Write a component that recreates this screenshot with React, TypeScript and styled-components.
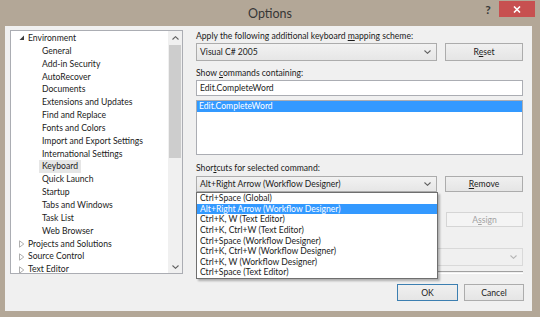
import React from 'react';
import styled, { createGlobalStyle } from 'styled-components';

const GlobalStyle = createGlobalStyle`
  html, body {
    margin: 0;
    padding: 0;
  }
  body {
    background: #b3a797;
    font-family: Lato, "Noto Sans", sans-serif;
  }
`;

interface TreeItem {
  label: string;
  level: number;
  state?: 'open' | 'closed';
  selected?: boolean;
}

const treeItems: TreeItem[] = [
  { label: 'Environment', level: 0, state: 'open' },
  { label: 'General', level: 1 },
  { label: 'Add-in Security', level: 1 },
  { label: 'AutoRecover', level: 1 },
  { label: 'Documents', level: 1 },
  { label: 'Extensions and Updates', level: 1 },
  { label: 'Find and Replace', level: 1 },
  { label: 'Fonts and Colors', level: 1 },
  { label: 'Import and Export Settings', level: 1 },
  { label: 'International Settings', level: 1 },
  { label: 'Keyboard', level: 1, selected: true },
  { label: 'Quick Launch', level: 1 },
  { label: 'Startup', level: 1 },
  { label: 'Tabs and Windows', level: 1 },
  { label: 'Task List', level: 1 },
  { label: 'Web Browser', level: 1 },
  { label: 'Projects and Solutions', level: 0, state: 'closed' },
  { label: 'Source Control', level: 0, state: 'closed' },
  { label: 'Text Editor', level: 0, state: 'closed' },
];

const shortcuts = [
  'Ctrl+Space (Global)',
  'Alt+Right Arrow (Workflow Designer)',
  'Ctrl+K, W (Text Editor)',
  'Ctrl+K, Ctrl+W (Text Editor)',
  'Ctrl+Space (Workflow Designer)',
  'Ctrl+K, Ctrl+W (Workflow Designer)',
  'Ctrl+K, W (Workflow Designer)',
  'Ctrl+Space (Text Editor)',
];

// Window chrome
const Window = styled.div`
  width: 540px;
  height: 317px;
  background: #b3a797;
  display: flex;
  flex-direction: column;
`;

const TitleBar = styled.div`
  height: 26px;
  flex-shrink: 0;
  display: grid;
  grid-template-columns: 1fr auto 1fr;
  align-items: center;
`;

const Title = styled.div`
  grid-column: 2;
  font-size: 12.5px;
  color: #363636;
  padding-top: 1px;
`;

const Controls = styled.div`
  grid-column: 3;
  justify-self: end;
  align-self: start;
  display: flex;
  align-items: center;
  gap: 5px;
  margin: 1px 5px 0 0;
`;

const HelpGlyph = styled.span`
  width: 12px;
  text-align: center;
  font-size: 12px;
  font-weight: bold;
  color: #3a3a3a;
`;

const CloseButton = styled.div`
  width: 36px;
  height: 16px;
  background: #c75050;
  display: flex;
  align-items: center;
  justify-content: center;
`;

const Client = styled.div`
  flex: 1;
  margin: 0 8px 6px 5px;
  padding: 4px 8px 10px 5px;
  background: #f0f0f0;
  display: flex;
  flex-direction: column;
  font-size: 8.6px;
  color: #1b1b1b;
`;

const Body = styled.div`
  display: flex;
  gap: 13px;
  height: 244px;
`;

// Tree
const TreeBox = styled.div`
  width: 173px;
  height: 244px;
  box-sizing: border-box;
  border: 1px solid #abadb3;
  background: #fff;
  display: flex;
  overflow: hidden;
`;

const TreeList = styled.ul`
  flex: 1;
  margin: 0;
  padding: 1px 0 0;
  list-style: none;
  overflow: hidden;
`;

const TreeRow = styled.li<{ $level: number }>`
  display: flex;
  align-items: center;
  height: 12.85px;
  padding-left: ${(p) => (p.$level === 0 ? 6 : 20)}px;
  white-space: nowrap;
`;

const Expander = styled.span`
  width: 11px;
  flex-shrink: 0;
  display: flex;
  align-items: center;
  padding-left: 2px;
  box-sizing: border-box;
`;

const TreeLabel = styled.span<{ $selected?: boolean }>`
  line-height: 12.85px;
  padding: 0 3px;
  margin-left: -3px;
  background: ${(p) => (p.$selected ? '#e6e6e6' : 'transparent')};
`;

const ScrollTrack = styled.div`
  width: 14px;
  flex-shrink: 0;
  background: #f0f0f0;
  display: flex;
  flex-direction: column;
`;

const ScrollArrow = styled.div`
  height: 13px;
  display: flex;
  align-items: center;
  justify-content: center;
`;

const ScrollThumb = styled.div`
  height: 113px;
  margin: 1px 1px 0;
  background: #cdcdcd;
`;

const ScrollSpace = styled.div`
  flex: 1;
`;

// Right pane
const Pane = styled.div`
  width: 327px;
  display: flex;
  flex-direction: column;
`;

const Label = styled.div<{ $gap: number }>`
  height: 12px;
  line-height: 12px;
  margin-top: ${(p) => p.$gap}px;
  white-space: nowrap;
`;

const Row = styled.div<{ $gap: number; $height: number }>`
  display: flex;
  gap: 8px;
  margin-top: ${(p) => p.$gap}px;
  height: ${(p) => p.$height}px;
`;

const ComboWrap = styled.div`
  position: relative;
  width: 241px;
  flex-shrink: 0;
`;

const Combo = styled.div<{ $disabled?: boolean }>`
  flex: 1;
  height: 100%;
  box-sizing: border-box;
  border: 1px solid ${(p) => (p.$disabled ? '#d9d9d9' : '#acacac')};
  background: ${(p) => (p.$disabled ? '#f0f0f0' : 'linear-gradient(#f2f2f2, #e6e6e6)')};
  display: flex;
  align-items: center;
  justify-content: space-between;
  padding: 0 5px 0 3px;
  white-space: nowrap;
`;

const Button = styled.div<{ $disabled?: boolean; $default?: boolean; $width?: number }>`
  width: ${(p) => p.$width ?? 78}px;
  height: 100%;
  box-sizing: border-box;
  border: 1px solid ${(p) => (p.$default ? '#3c7fb1' : p.$disabled ? '#d5d5d5' : '#acacac')};
  background: ${(p) => (p.$disabled ? '#f4f4f4' : 'linear-gradient(#f0f0f0, #e5e5e5)')};
  color: ${(p) => (p.$disabled ? '#a3a3a3' : '#1b1b1b')};
  display: flex;
  align-items: center;
  justify-content: center;
`;

const TextBox = styled.div<{ $gap: number; $height: number; $grow?: boolean }>`
  margin-top: ${(p) => p.$gap}px;
  height: ${(p) => p.$height}px;
  ${(p) => (p.$grow ? 'flex: 1;' : '')}
  box-sizing: border-box;
  border: 1px solid #abadb3;
  background: #fff;
  display: flex;
  align-items: center;
  padding: 0 3px;
`;

const ListBox = styled.div`
  margin-top: 4px;
  height: 56px;
  box-sizing: border-box;
  border: 1px solid #abadb3;
  background: #fff;
`;

const ListItem = styled.div<{ $selected?: boolean }>`
  height: 11px;
  line-height: 11px;
  padding: 0 2px;
  background: ${(p) => (p.$selected ? '#3399ff' : 'transparent')};
  color: ${(p) => (p.$selected ? '#fff' : 'inherit')};
`;

const DropList = styled.div`
  position: absolute;
  top: 100%;
  left: 0;
  width: 242px;
  box-sizing: border-box;
  border: 1px solid #6f6f6f;
  background: #fff;
  box-shadow: 2px 2px 2px rgba(0, 0, 0, 0.28);
  z-index: 2;
`;

const DropItem = styled.div<{ $selected?: boolean }>`
  height: 10.6px;
  line-height: 10.6px;
  padding: 0 3px;
  white-space: nowrap;
  background: ${(p) => (p.$selected ? '#3399ff' : 'transparent')};
  color: ${(p) => (p.$selected ? '#fff' : 'inherit')};
`;

const Separator = styled.div`
  margin-top: 5px;
  height: 1px;
  border-top: 1px solid #a0a0a0;
  border-bottom: 1px solid #fff;
`;

const Footer = styled.div`
  display: flex;
  justify-content: flex-end;
  gap: 6px;
  margin-top: 10px;
  height: 17px;
`;

function Chevron({ up, color = '#606060' }: { up?: boolean; color?: string }) {
  return (
    <svg width="7" height="4" viewBox="0 0 7 4">
      <polyline
        points={up ? '0.5,3.5 3.5,0.7 6.5,3.5' : '0.5,0.5 3.5,3.3 6.5,0.5'}
        fill="none"
        stroke={color}
        strokeWidth="1.1"
      />
    </svg>
  );
}

function ExpandGlyph({ state }: { state: 'open' | 'closed' }) {
  return state === 'open' ? (
    <svg width="6" height="6" viewBox="0 0 6 6">
      <polygon points="5,0.5 5,5 0.5,5" fill="#3c3c3c" />
    </svg>
  ) : (
    <svg width="6" height="8" viewBox="0 0 6 8">
      <polygon points="0.5,0.8 4.8,4 0.5,7.2" fill="none" stroke="#a6a6a6" strokeWidth="0.9" />
    </svg>
  );
}

export default function App() {
  return (
    <Window>
      <GlobalStyle />
      <TitleBar>
        <Title>Options</Title>
        <Controls>
          <HelpGlyph>?</HelpGlyph>
          <CloseButton>
            <svg width="8" height="7" viewBox="0 0 8 7">
              <path d="M1 0.5 L7 6.5 M7 0.5 L1 6.5" stroke="#fff" strokeWidth="1.6" />
            </svg>
          </CloseButton>
        </Controls>
      </TitleBar>

      <Client>
        <Body>
          <TreeBox>
            <TreeList>
              {treeItems.map((item) => (
                <TreeRow key={item.label} $level={item.level}>
                  <Expander>{item.state && <ExpandGlyph state={item.state} />}</Expander>
                  <TreeLabel $selected={item.selected}>{item.label}</TreeLabel>
                </TreeRow>
              ))}
            </TreeList>
            <ScrollTrack>
              <ScrollArrow>
                <Chevron up />
              </ScrollArrow>
              <ScrollThumb />
              <ScrollSpace />
              <ScrollArrow>
                <Chevron />
              </ScrollArrow>
            </ScrollTrack>
          </TreeBox>

          <Pane>
            <Label $gap={0}>
              Apply the following additional keyboard <u>m</u>apping scheme:
            </Label>
            <Row $gap={1} $height={18}>
              <ComboWrap>
                <Combo>
                  <span>Visual C# 2005</span>
                  <Chevron />
                </Combo>
              </ComboWrap>
              <Button>
                R<u>e</u>set
              </Button>
            </Row>

            <Label $gap={6}>
              Show <u>c</u>ommands containing:
            </Label>
            <TextBox $gap={1} $height={16}>
              Edit.CompleteWord
            </TextBox>
            <ListBox>
              <ListItem $selected>Edit.CompleteWord</ListItem>
            </ListBox>

            <Label $gap={7}>
              Shor<u>t</u>cuts for selected command:
            </Label>
            <Row $gap={2} $height={16}>
              <ComboWrap>
                <Combo>
                  <span>Alt+Right Arrow (Workflow Designer)</span>
                  <Chevron />
                </Combo>
                <DropList>
                  {shortcuts.map((s, i) => (
                    <DropItem key={s} $selected={i === 1}>
                      {s}
                    </DropItem>
                  ))}
                </DropList>
              </ComboWrap>
              <Button>
                <u>R</u>emove
              </Button>
            </Row>

            {/* labels here sit under the open drop-down and are not visible */}
            <Label $gap={6} />
            <Row $gap={2} $height={15}>
              <TextBox $gap={0} $height={15} $grow />
              <Button $disabled $width={77}>
                A<u>s</u>sign
              </Button>
            </Row>

            <Label $gap={8} />
            <Row $gap={1} $height={18}>
              <Combo $disabled>
                <span />
                <Chevron color="#b5b5b5" />
              </Combo>
            </Row>
            <Separator />
          </Pane>
        </Body>

        <Footer>
          <Button $default $width={61}>
            OK
          </Button>
          <Button $width={60}>Cancel</Button>
        </Footer>
      </Client>
    </Window>
  );
}
